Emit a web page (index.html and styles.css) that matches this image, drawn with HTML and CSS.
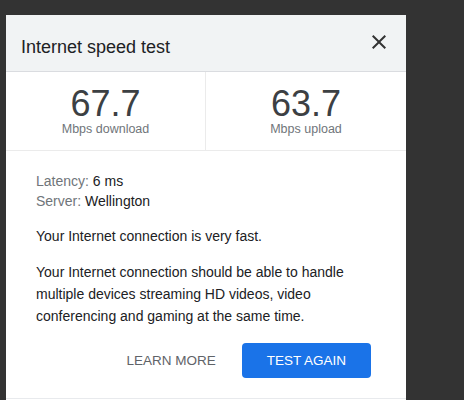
FILE: index.html
```html
<!DOCTYPE html>
<html>
<head>
	<title> Internet speed test </title>
	<meta name="viewport" content="width=device-width, initial-scale=1">
	<link rel="stylesheet" href="styles.css">
</head>
<body>
    <div class="panel">
        <div class="header">
            <h1> Internet speed test </h1>
            <button class="close" aria-label="Close">
                <svg width="24" height="24" viewBox="0 0 24 24">
                    <path d="M19 6.41L17.59 5 12 10.59 6.41 5 5 6.41 10.59 12 5 17.59 6.41 19 12 13.41 17.59 19 19 17.59 13.41 12z" fill="#333"/>
                </svg>
            </button>
        </div>

        <div class="stats">
            <div class="stat">
                <div class="value">67.7</div>
                <div class="unit">Mbps download</div>
            </div>
            <div class="stat">
                <div class="value">63.7</div>
                <div class="unit">Mbps upload</div>
            </div>
        </div>

        <div class="info">
            <div class="details">
                <div><span class="label">Latency:</span> 6 ms</div>
                <div><span class="label">Server:</span> Wellington</div>
            </div>
            <p>Your Internet connection is very fast.</p>
            <p>Your Internet connection should be able to handle multiple devices streaming HD videos, video conferencing and gaming at the same time.</p>
        </div>

        <div class="actions">
            <button class="link">LEARN MORE</button>
            <button class="primary">TEST AGAIN</button>
        </div>

        <div class="footer"></div>
    </div>
</body>
</html>
```

FILE: styles.css
```css
html, body {
    overflow: hidden;
}
body {
    font-family: 'Liberation Sans', Arial, sans-serif;
    background-color: #333;
    margin: 0;
}
.panel {
    width: 400px;
    margin: 15px 0 0 6px;
    background-color: #fff;
}
.header {
    display: flex;
    justify-content: space-between;
    align-items: flex-start;
    height: 56px;
    padding: 0 15px 0 15px;
    background-color: #f1f3f4;
    border-bottom: 1px solid #dadce0;
}
h1 {
    margin: 0;
    padding-top: 20px;
    font-size: 18px;
    font-weight: 400;
    line-height: 24px;
    color: #202124;
}
button.close {
    width: 24px;
    height: 24px;
    margin-top: 15px;
    padding: 0;
    border: none;
    background: none;
    cursor: pointer;
}
button.close svg {
    display: block;
}
.stats {
    display: flex;
    border-bottom: 1px solid #ebebeb;
}
.stat {
    box-sizing: border-box;
    width: 200px;
    padding: 14px 0;
    text-align: center;
}
.stat:first-child {
    border-right: 1px solid #ebebeb;
}
.value {
    font-size: 36px;
    line-height: 36px;
    color: #3c4043;
}
.unit {
    font-size: 12.5px;
    line-height: 14px;
    color: #70757a;
}
.info {
    padding: 20px 35px 0 30px;
    font-size: 14px;
    color: #202124;
}
.details {
    line-height: 20px;
}
.label {
    color: #70757a;
}
.info p {
    margin: 14px 0 0;
    line-height: 22px;
}
.actions {
    display: flex;
    justify-content: flex-end;
    gap: 1px;
    margin-top: 16px;
    padding-right: 35px;
}
.actions button {
    height: 35px;
    padding: 0 25px;
    border: none;
    border-radius: 4px;
    outline: none;
    font-family: 'Liberation Sans', Arial, sans-serif;
    font-size: 13.5px;
    cursor: pointer;
}
button.link {
    background: none;
    color: #5f6368;
}
button.primary {
    background-color: #1a73e8;
    color: #fff;
}
.footer {
    height: 48px;
    margin-top: 20px;
    border-top: 1px solid #e8eaed;
}
```
